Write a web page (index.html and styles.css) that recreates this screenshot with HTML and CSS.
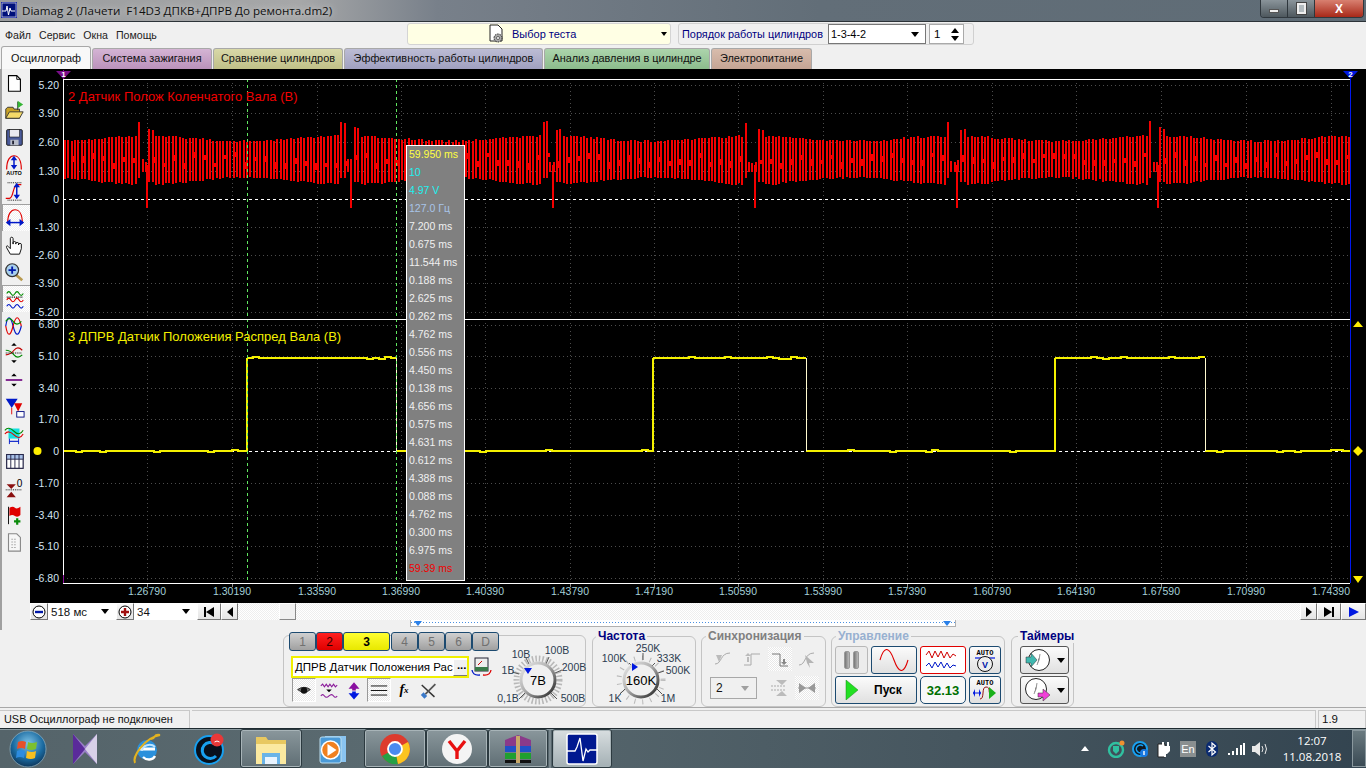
FILE: index.html
```html
<!DOCTYPE html>
<html lang="ru">
<head>
<meta charset="utf-8">
<title>Diamag 2</title>
<link rel="stylesheet" href="styles.css">
</head>
<body>
<div class="app">
  <header class="titlebar">
    <svg class="appicon" width="16" height="16" viewBox="0 0 16 16"><rect width="16" height="16" fill="#0a1a9a"/><rect x="1" y="1" width="14" height="14" fill="#00107a" stroke="#fff" stroke-width=".6"/><path d="M1 9h4l1-5 1.500 9 1.500-7 1 3h4" fill="none" stroke="#fff" stroke-width="1"/></svg>
    <span class="title">Diamag 2 (Лачети&nbsp; F14D3 ДПКВ+ДПРВ До ремонта.dm2)</span>
    <div class="winbtns">
      <span class="wb wb-min"><i class="minbar"></i></span>
      <span class="wb wb-max"><i class="maxbox"></i></span>
      <span class="wb wb-close">X</span>
    </div>
  </header>

  <div class="menurow">
    <nav class="menu"><span>Файл</span><span>Сервис</span><span>Окна</span><span>Помощь</span></nav>
    <div class="testpick">
      <svg width="18" height="20" viewBox="0 0 18 20"><path d="M2 1h8l4 4v12H2z" fill="#fff" stroke="#222"/><circle cx="10" cy="14" r="4" fill="#aaa" stroke="#222" stroke-dasharray="1.500 1"/><circle cx="10" cy="14" r="1.500" fill="#fff" stroke="#222" stroke-width=".6"/></svg>
      <span>Выбор теста</span><b class="tri tri-s"></b>
    </div>
    <div class="orderbox">
      <span>Порядок работы цилиндров</span>
      <div class="sel"><span>1-3-4-2</span><b class="tri"></b></div>
      <div class="spin"><span>1</span><div class="spinbtns"><b class="tri tri-up"></b><b class="tri"></b></div></div>
    </div>
  </div>

  <div class="tabs">
    <span class="tab t0">Осциллограф</span>
    <span class="tab t1">Система зажигания</span>
    <span class="tab t2">Сравнение цилиндров</span>
    <span class="tab t3">Эффективность работы цилиндров</span>
    <span class="tab t4">Анализ давления в цилиндре</span>
    <span class="tab t5">Электропитание</span>
  </div>

  <div class="workspace">
    <aside class="tools">
      <span class="tool"><svg viewBox="0 0 24 24"><path d="M6 4h9l4 4v13H6z" fill="#fff" stroke="#000" stroke-width="1.200"/><path d="M15 4v4h4" fill="none" stroke="#000"/></svg></span>
      <span class="tool"><svg viewBox="0 0 24 24"><path d="M3 21V11l2-2h6l1 2h6v10z" fill="#c9a227" stroke="#333"/><path d="M3 21l4-7h15l-4 7z" fill="#f4d968" stroke="#333"/><path d="M16 3v9" stroke="#333"/><path d="M16 2l6 4-6 4z" fill="#35b535"/></svg></span>
      <span class="tool"><svg viewBox="0 0 24 24"><rect x="4" y="4" width="17" height="17" rx="1" fill="#4a5a9a" stroke="#111"/><rect x="7" y="4" width="11" height="8" fill="#e8e8f0" stroke="#111" stroke-width=".6"/><rect x="8" y="15" width="9" height="6" fill="#b8bcc8"/><rect x="10" y="16" width="2" height="4" fill="#223"/></svg></span>
      <span class="tool"><svg viewBox="0 0 24 24"><path d="M4 18C4 7 8 3 12 3s8 4 8 15" fill="none" stroke="#e00000" stroke-width="1.300"/><path d="M12 5v11" stroke="#0018c8" stroke-width="1.600"/><path d="M8.500 8 12 3l3.500 5zM8.500 13 12 18l3.500-5z" fill="#0018c8"/><text x="12" y="24" class="ictext">AUTO</text></svg></span>
      <span class="tool"><svg viewBox="0 0 24 24"><path d="M3 20h4c5 0 3-15 9-15h4" fill="none" stroke="#e00000" stroke-width="1.300"/><path d="M5 3h15" stroke="#000" stroke-dasharray="1 1"/><path d="M5 22h15" stroke="#000" stroke-dasharray="1 1"/><path d="M15 6v12" stroke="#0018c8" stroke-width="1.600"/><path d="M11.500 8 15 3l3.500 5zM11.500 16l3.500 5 3.500-5z" fill="#0018c8"/></svg></span>
      <span class="tool pressed"><svg viewBox="0 0 24 24"><path d="M4 18C4 7 8 3 12 3s8 4 8 15" fill="none" stroke="#e00000" stroke-width="1.300"/><path d="M5 17h14" stroke="#0018c8" stroke-width="1.600"/><path d="M7 13l-5 4 5 4zM17 13l5 4-5 4z" fill="#0018c8"/></svg></span>
      <span class="tool"><svg viewBox="0 0 24 24"><path d="M8 22l-4-7c-1-2 1-3 2-1l2 2V5c0-2 3-2 3 0v6-2c0-1 3-1 3 0v2-1c0-1 3-1 3 0v2-1c0-1 3-1 3 0v5l-2 6z" fill="#fff" stroke="#000"/></svg></span>
      <span class="tool"><svg viewBox="0 0 24 24"><path d="M14 15l7 6" stroke="#b89a50" stroke-width="3"/><circle cx="10" cy="10" r="7" fill="#a8d0ee" stroke="#333" stroke-width="1.300"/><path d="M6 10h8M10 6v8" stroke="#0018a8" stroke-width="2"/></svg></span>
      <span class="tool pressed"><svg viewBox="0 0 24 24"><g fill="none" stroke-width="1.200"><path d="M3 6q2.200-4 4.500 0t4.500 0 4.500 0 4.500 0" stroke="#008a00"/><path d="M3 13q2.200-4 4.500 0t4.500 0 4.500 0 4.500 0" stroke="#e00000"/><path d="M3 20q2.200-4 4.500 0t4.500 0 4.500 0 4.500 0" stroke="#0018c8"/><path d="M3 10h18" stroke="#000" stroke-dasharray="1 1"/></g></svg></span>
      <span class="tool"><svg viewBox="0 0 24 24"><g fill="none" stroke-width="1.300"><path d="M3 12C5 0 8 0 11 12s6 12 9 0" stroke="#0018c8"/><path d="M3 12C5 24 8 24 11 12s6-12 9 0" stroke="#e00000"/><path d="M3 7q4-6 8 0t9 0" stroke="#008a00"/></g></svg></span>
      <span class="tool"><svg viewBox="0 0 24 24"><g fill="none" stroke-width="1.300"><path d="M3 9q5 0 9 5t9 0" stroke="#008a00"/><path d="M3 14q5 0 9-5t9 0" stroke="#c00000"/><path d="M3 12h18" stroke="#000" stroke-dasharray="1 1"/></g><path d="M9 4l3-3 3 3zM9 20l3 3 3-3z" fill="#000"/></svg></span>
      <span class="tool"><svg viewBox="0 0 24 24"><path d="M3 12h18" stroke="#7a1a8a" stroke-width="2"/><path d="M9 8l3-3 3 3zM9 16l3 3 3-3z" fill="#000"/></svg></span>
      <span class="tool"><svg viewBox="0 0 24 24"><path d="M3 3h13l-6.500 10z" fill="#0018c8"/><path d="M12 8h9l-4.500 9z" fill="#e00000"/><path d="M9.500 13v7M16.500 17v5" stroke="#e00000"/><rect x="15" y="17" width="8" height="6" fill="#fff" stroke="#000a80"/></svg></span>
      <span class="tool"><svg viewBox="0 0 24 24"><path d="M6 6h12v11H6z" fill="#15e0e0"/><g fill="none" stroke-width="1.200"><path d="M2 8q4-5 10 1t10-1" stroke="#008a00"/><path d="M2 12q4-5 10 1t10-1" stroke="#e00000"/><path d="M7 20h10" stroke="#0018c8"/></g><path d="M7 17v6M17 17v6" stroke="#0018c8"/></svg></span>
      <span class="tool"><svg viewBox="0 0 24 24"><rect x="4" y="5" width="18" height="15" fill="#fff" stroke="#222244" stroke-width="1.300"/><rect x="4" y="5" width="18" height="5" fill="#a8c0e8" stroke="#222244"/><path d="M8.500 5v15M13 5v15M17.500 5v15" stroke="#222244"/></svg></span>
      <span class="tool"><svg viewBox="0 0 24 24"><path d="M4 8h10l-5 5zM4 22h10l-5-6z" fill="#8a1010"/><path d="M3 14h18" stroke="#000" stroke-dasharray="1 1"/><text x="18" y="11" class="ictext ic-zero">0</text></svg></span>
      <span class="tool"><svg viewBox="0 0 24 24"><path d="M6 3v19" stroke="#000"/><path d="M7 4q4-2 6 0t6-1v9q-3 3-6 1t-6 0z" fill="#e00000"/><path d="M12 19h7M15.500 15.500v7" stroke="#0a8a0a" stroke-width="2.400"/></svg></span>
      <span class="tool"><svg viewBox="0 0 24 24"><path d="M6 3h9l4 4v15H6z" fill="#f6f6f6" stroke="#888" stroke-width="1.200"/><path d="M9 9h6M9 12h6M9 15h6M9 18h6" stroke="#aaa" stroke-dasharray="2 1"/></svg></span>
    </aside>

    <div class="scopecol">
      <div class="scope">
        <svg id="plot" class="plot" width="1336" height="534" viewBox="30 69 1336 534">
          <path class="grid" d="M63 85H1350M63 113H1350M63 142H1350M63 171H1350M63 227H1350M63 255H1350M63 283H1350M63 312H1350M63 325H1350M63 356H1350M63 388H1350M63 419H1350M63 483H1350M63 515H1350M63 546H1350M63 578H1350M147 79V583M232 79V583M317 79V583M401 79V583M485 79V583M570 79V583M654 79V583M738 79V583M823 79V583M907 79V583M992 79V583M1076 79V583M1161 79V583M1246 79V583M1331 79V583"/>
          <path class="ticks" d="M147 583v4M232 583v4M317 583v4M401 583v4M485 583v4M570 583v4M654 583v4M738 583v4M823 583v4M907 583v4M992 583v4M1076 583v4M1161 583v4M1246 583v4M1331 583v4"/>
          <path class="zero" d="M63 199.500H1350M63 451.500H1350"/>
          <path id="red" class="redwave" d=""/>
          <path id="yellow" class="yellowwave" d=""/>
          <path class="fall" d="M396.500 358V451M806.500 358V451M1205.500 358V451"/>
          <path class="cursor" d="M247.500 79V583M396.500 79V583"/>
          <path class="frame" d="M63.500 79V583M63 79.500H1350M30 319.500H1350M63 583.500H1350"/>
          <path class="bluel" d="M1350.500 79V583"/>
          <path class="purplel" d="M63.500 70V79M63.500 575V583"/>
          <path d="M56 71h15l-7.500 8z" fill="#7a0e8a"/>
          <text x="63.500" y="76.500" class="mark">1</text>
          <path d="M1343 71h15l-7.500 8z" fill="#0018e0"/>
          <text x="1350.500" y="77" class="mark">2</text>
          <path d="M1353 327l5-6 5 6zM1353 576l5 7 5-7zM1358 446l5 5-5 5-5-5z" fill="#ffee00"/>
          <circle cx="37.500" cy="451" r="4" fill="#ffee00"/>
          <text x="68" y="101" class="lbl lbl-r">2 Датчик Полож Коленчатого Вала (В)</text>
          <text x="68" y="341" class="lbl lbl-y">3 ДПРВ Датчик Положения Распред Вала (В)</text>
          <g class="yl">
            <text x="59" y="89">5.20</text><text x="59" y="117">3.90</text><text x="59" y="146">2.60</text><text x="59" y="175">1.30</text><text x="59" y="203">0</text><text x="59" y="231">-1.30</text><text x="59" y="259">-2.60</text><text x="59" y="287">-3.90</text><text x="59" y="316">-5.20</text>
            <text x="59" y="328">6.80</text><text x="59" y="360">5.10</text><text x="59" y="392">3.40</text><text x="59" y="423">1.70</text><text x="59" y="455">0</text><text x="59" y="487">-1.70</text><text x="59" y="519">-3.40</text><text x="59" y="550">-5.10</text><text x="59" y="582">-6.80</text>
          </g>
          <g class="xl">
            <text x="147" y="595">1.26790</text><text x="232" y="595">1.30190</text><text x="317" y="595">1.33590</text><text x="401" y="595">1.36990</text><text x="485" y="595">1.40390</text><text x="570" y="595">1.43790</text><text x="654" y="595">1.47190</text><text x="738" y="595">1.50590</text><text x="823" y="595">1.53990</text><text x="907" y="595">1.57390</text><text x="992" y="595">1.60790</text><text x="1076" y="595">1.64190</text><text x="1161" y="595">1.67590</text><text x="1246" y="595">1.70990</text><text x="1331" y="595">1.74390</text>
          </g>
        </svg>
        <div class="readout">
          <span class="c-y">59.950 ms</span><span class="c-c">10</span><span class="c-c">4.97 V</span><span class="c-b">127.0 Гц</span>
          <span>7.200 ms</span><span>0.675 ms</span><span>11.544 ms</span><span>0.188 ms</span><span>2.625 ms</span><span>0.262 ms</span><span>4.762 ms</span><span>0.556 ms</span><span>4.450 ms</span><span>0.138 ms</span><span>4.656 ms</span><span>0.575 ms</span><span>4.631 ms</span><span>0.612 ms</span><span>4.388 ms</span><span>0.088 ms</span><span>4.762 ms</span><span>0.300 ms</span><span>6.975 ms</span>
          <span class="c-r">59.39 ms</span>
        </div>
      </div>
      <div class="scrollrow">
        <span class="rbtn w18"><svg width="14" height="14" viewBox="0 0 14 14"><circle cx="7" cy="7" r="6" fill="#fff" stroke="#000"/><path d="M3 7h8" stroke="#0018a8" stroke-width="2.400"/></svg></span>
        <div class="combo c68"><span>518 мс</span><b class="tri"></b></div>
        <span class="rbtn w18"><svg width="14" height="14" viewBox="0 0 14 14"><circle cx="7" cy="7" r="6" fill="#fff" stroke="#000"/><path d="M3 7h8M7 3v8" stroke="#a01010" stroke-width="2.400"/></svg></span>
        <div class="combo c62"><span>34</span><b class="tri"></b></div>
        <span class="rbtn w24"><svg width="12" height="10" viewBox="0 0 12 10"><path d="M1 0h2v10H1zM11 0v10L3 5z"/></svg></span>
        <span class="rbtn w17"><svg width="6" height="10" viewBox="0 0 6 10"><path d="M6 0v10L0 5z"/></svg></span>
        <div class="track"><span class="thumb"></span></div>
        <span class="rbtn w17"><svg width="6" height="10" viewBox="0 0 6 10"><path d="M0 0v10l6-5z"/></svg></span>
        <span class="rbtn w24"><svg width="12" height="10" viewBox="0 0 12 10"><path d="M9 0h2v10H9zM1 0v10l8-5z"/></svg></span>
        <span class="rbtn w25"><svg width="12" height="10" viewBox="0 0 12 10"><path d="M1 0v10l10-5z" fill="#0018e0"/></svg></span>
      </div>
    </div>
  </div>

  <div class="strip"><span class="stripbar"><b class="bt"></b><b class="bt"></b></span></div>

  <section class="panels">
    <div class="group g-chan">
      <div class="chanleft">
        <div class="chans">
          <span class="ch">1</span><span class="ch ch-red">2</span><span class="ch ch-yel">3</span><span class="ch">4</span><span class="ch">5</span><span class="ch">6</span><span class="ch">D</span>
        </div>
        <div class="namerow">
          <div class="namefield"><span>ДПРВ Датчик Положения Рас</span><b class="dots">...</b></div>
          <svg width="22" height="22" viewBox="0 0 22 22"><rect x="5" y="2" width="13" height="13" fill="#eee" stroke="#223"/><rect x="5" y="11" width="13" height="4" fill="#3a7a4a"/><path d="M8 9l4-4" stroke="#c00"/><path d="M2 14q1 6 8 5" fill="none" stroke="#0018c8" stroke-width="1.300"/><path d="M21 14q-1 6-8 5" fill="none" stroke="#d00" stroke-width="1.300"/></svg>
        </div>
        <div class="iconrow">
          <span class="ic pressed"><svg viewBox="0 0 22 20"><path d="M4 9q7-5 14 0-7 6-14 0z" fill="#777" stroke="#222"/><circle cx="11" cy="10" r="3.500" fill="#111"/></svg></span>
          <span class="ic"><svg viewBox="0 0 22 20"><g fill="none" stroke="#8a1a9a" stroke-width="1.200"><path d="M2 5l2-2 2 3 2-3 2 3 2-3 2 3 2-3 2 3 2-2"/><path d="M2 16q2-3 4 0t5 0 5 0 4 0"/></g><path d="M8 9h6l-3 3z" fill="#000"/></svg></span>
          <span class="ic"><svg viewBox="0 0 22 20"><path d="M11 1l6 7h-4v2H9V8H5z" fill="#8a10a0"/><path d="M11 20l6-7h-4v-2H9v2H5z" fill="#0018e0"/></svg></span>
          <span class="ic pressed"><svg viewBox="0 0 22 20"><path d="M2 5h18M2 10h18M2 15h18" stroke="#000"/></svg></span>
          <span class="ic ic-fx">f<small>x</small></span>
          <span class="ic"><svg viewBox="0 0 22 20"><path d="M3 4l14 13" stroke="#333" stroke-width="1.600"/><path d="M18 3l-11 11" stroke="#555" stroke-width="2"/><path d="M5 12l4 4-3 3-4-4z" fill="#3a78c8"/></svg></span>
        </div>
      </div>
      <svg class="knob" width="83" height="68" viewBox="0 0 83 68">
        <defs><linearGradient id="rg" x1="0" y1="0" x2="1" y2="1"><stop offset="0" stop-color="#e8e8e8"/><stop offset=".45" stop-color="#b0b0b0"/><stop offset="1" stop-color="#202020"/></linearGradient></defs>
        <circle cx="36" cy="44" r="21.500" class="kticks"/>
        <path d="M23 57l-6 6M17 38l-7-2M27 28l-3-6M44 28l3-7M53 37l7-3M49 57l6 6" class="kmaj"/>
        <circle cx="36" cy="44" r="17" class="kring"/>
        <path d="M22 32h8l-4 6z" fill="#0018e0"/>
        <text x="36" y="48.500" class="kval">7В</text>
        <text x="19" y="22" class="klab">10В</text>
        <text x="55" y="18" class="klab">100В</text>
        <text x="6" y="38" class="klab">1В</text>
        <text x="72" y="35" class="klab">200В</text>
        <text x="6" y="66" class="klab">0,1В</text>
        <text x="71" y="66" class="klab">500В</text>
      </svg>
    </div>

    <fieldset class="group g-freq">
      <legend class="lg-navy">Частота</legend>
      <svg class="knob" width="102" height="60" viewBox="0 0 102 60">
        <circle cx="48" cy="37" r="22" class="kticks kt-wide"/>
        <path d="M50 10V17M36 20l4 4M62 20l-4 4M71 28l-6 2M27 51l5-5M69 51l-5-5" class="kmaj"/>
        <circle cx="48" cy="37" r="17" class="kring"/>
        <path d="M39 20v8l6-4z" fill="#0018e0"/>
        <text x="48" y="41.500" class="kval">160K</text>
        <text x="55" y="9" class="klab">250K</text>
        <text x="21" y="19" class="klab">100K</text>
        <text x="76" y="19" class="klab">333K</text>
        <text x="85" y="31" class="klab">500K</text>
        <text x="22" y="59" class="klab">1K</text>
        <text x="75" y="59" class="klab">1M</text>
      </svg>
    </fieldset>

    <fieldset class="group g-sync">
      <legend class="lg-gray">Синхронизация</legend>
      <div class="syncgrid">
        <span class="si"><svg viewBox="0 0 20 20"><path d="M2 15c7 0 5-11 15-11" fill="none" stroke="#aaa"/><path d="M3 6l6 0-3 7z" fill="#bbb"/></svg></span>
        <span class="si"><svg viewBox="0 0 20 20"><path d="M2 16h7V5h9" fill="none" stroke="#aaa"/><path d="M3 7l3-3 3 3zM5 8h2v5H5z" fill="#bbb"/></svg></span>
        <span class="si pressed"><svg viewBox="0 0 20 20"><path d="M2 5h8v12h8" fill="none" stroke="#777"/><path d="M13 10h2v4h-2zM11 13h6l-3 3z" fill="#888"/></svg></span>
        <span class="si"><svg viewBox="0 0 20 20"><path d="M2 16c7 0 5-12 15-12" fill="none" stroke="#aaa"/><path d="M8 6l9 8-5 0 1 5-3-5z" fill="#b4b4b4"/></svg></span>
        <div class="syncsel"><span>2</span><b class="tri tri-dis"></b></div>
        <span class="si"><svg viewBox="0 0 20 20"><path d="M1 8h14M1 12h14" stroke="#aaa" stroke-dasharray="2 1"/><path d="M6 2h11l-5 5zM6 18h11l-5-5z" fill="#bbb"/></svg></span>
        <span class="si pressed"><svg viewBox="0 0 20 20"><path d="M1 10h18" stroke="#999"/><path d="M2 5l7 5-7 5zM18 5l-7 5 7 5z" fill="#999"/></svg></span>
      </div>
    </fieldset>

    <fieldset class="group g-ctrl">
      <legend class="lg-lblue">Управление</legend>
      <div class="ctrlgrid">
        <span class="cb cb-dis"><i class="pbar"></i><i class="pbar"></i></span>
        <span class="cb"><svg width="30" height="22" viewBox="0 0 30 22"><path d="M1 11C5-3 10-3 15 11s10 14 14 0" fill="none" stroke="#e00000" stroke-width="1.100"/></svg></span>
        <span class="cb cb-redb"><svg width="36" height="24" viewBox="0 0 36 24"><path d="M1 7l3-4 3 7 3-7 3 6 3-6 3 7 3-6 3 6 3-4 3 2" fill="none" stroke="#d00000"/><path d="M1 18l3-3 3 5 3-6 3 5 3-5 3 6 3-5 3 5 3-3 3 1" fill="none" stroke="#0018c8"/></svg></span>
        <span class="cb"><svg width="26" height="26" viewBox="0 0 26 26"><text x="13" y="7.500" class="ictext ic-auto">AUTO</text><path d="M3 11h20" stroke="#0018e0" stroke-width="1.200"/><circle cx="13" cy="17" r="7.500" fill="#eee" stroke="#111"/><text x="13" y="20.500" class="ictext ic-v">V</text></svg></span>
        <span class="cb cb-start"><svg width="14" height="20" viewBox="0 0 14 20"><path d="M1 0v20l12-10z" fill="#22e022" stroke="#1a8a1a" stroke-width=".5"/></svg><b>Пуск</b></span>
        <span class="cb cb-num">32.13</span>
        <span class="cb"><svg width="26" height="26" viewBox="0 0 26 26"><text x="13" y="7.500" class="ictext ic-auto">AUTO</text><path d="M1 16h8" stroke="#0018e0"/><path d="M3 12l-2 4 2 4zM7 12l2 4-2 4z" fill="#0018e0"/><path d="M8 22c5 0 1-12 6-12s2 6 4 6" fill="none" stroke="#901010"/><path d="M17 10v12l7-6z" fill="#18b018"/></svg></span>
      </div>
    </fieldset>

    <fieldset class="group g-time">
      <legend class="lg-navy">Таймеры</legend>
      <div class="timers">
        <span class="cb tb"><svg width="26" height="24" viewBox="0 0 26 24"><circle cx="14" cy="12" r="10.500" fill="#fff" stroke="#222"/><path d="M15 6l-1 6-2 5" stroke="#999"/><path d="M1 9h5V5l6 7-6 7v-4H1z" fill="#40b8b0" stroke="#333" stroke-width=".5"/></svg><b class="tri"></b></span>
        <span class="cb tb"><svg width="26" height="24" viewBox="0 0 26 24"><circle cx="11" cy="11" r="10.500" fill="#fff" stroke="#222"/><path d="M12 5l-1 6-2 5" stroke="#999"/><path d="M13 15h5v-4l7 6-7 6v-4h-5z" fill="#f040d8" stroke="#333" stroke-width=".5"/></svg><b class="tri"></b></span>
      </div>
    </fieldset>
  </section>

  <footer class="status">
    <span class="st st1">USB Осциллограф не подключен</span>
    <span class="st st2"></span>
    <span class="st st3">1.9</span>
  </footer>

  <div class="taskbar">
    <span class="orb"><svg width="40" height="40" viewBox="0 0 40 40"><defs><radialGradient id="og" cx=".5" cy=".35" r=".7"><stop offset="0" stop-color="#7fc4e8"/><stop offset=".6" stop-color="#1a6aa0"/><stop offset="1" stop-color="#0c2c4c"/></radialGradient></defs><circle cx="20" cy="20" r="18" fill="url(#og)" stroke="#8ab" stroke-width=".8"/><path d="M10 13q4-2 8 0l-1 7q-4-2-8 0z" fill="#e8502a"/><path d="M20 13q4 2 9 0l-1 7q-5 2-9 0z" fill="#7cc030"/><path d="M9 22q4-2 8 0l-1 7q-4-2-8 0z" fill="#2d8ce0"/><path d="M19 22q5 2 9 0l-1 7q-4 2-9 0z" fill="#f8c020"/></svg></span>
    <span class="task"><svg width="34" height="34" viewBox="0 0 34 34"><path d="M5 2l12 12L29 2v30L17 20 5 32z" fill="#9a80c8"/><path d="M5 2l12 15L5 32z" fill="#5a2a9a"/><path d="M29 2 17 17l12 15z" fill="#d8d0e8"/></svg></span>
    <span class="task"><svg width="34" height="34" viewBox="0 0 34 34"><circle cx="17" cy="18" r="10" fill="#2a90dc"/><path d="M9 17h16" stroke="#fff" stroke-width="3"/><path d="M12 19c0-6 9-8 13-4" fill="none" stroke="#bfe4ff" stroke-width="2"/><path d="M5 31C2 25 14 6 30 3c-8-1-2 2-9 4" fill="none" stroke="#e2b220" stroke-width="2"/><path d="M25 24c-2 4-8 5-12 1" fill="none" stroke="#fff" stroke-width="2.400"/></svg></span>
    <span class="task"><svg width="34" height="34" viewBox="0 0 34 34"><circle cx="17" cy="18" r="14" fill="#08101c" stroke="#18a0f0" stroke-width="2"/><path d="M23 12a8 8 0 1 0 1 12" fill="none" stroke="#18a0f0" stroke-width="3"/><circle cx="25" cy="8" r="6.500" fill="#e83838"/><path d="M22.500 10q2.500-2 5 0" fill="none" stroke="#fff"/></svg></span>
    <span class="task on"><svg width="36" height="34" viewBox="0 0 36 34"><path d="M3 5h10l2 3h18v24H3z" fill="#e8c860"/><path d="M3 12h30v20H3z" fill="#fbe9a0"/><rect x="9" y="21" width="18" height="11" fill="#6ab4e8"/><rect x="12" y="25" width="12" height="7" fill="#e9f4ff"/></svg></span>
    <span class="task"><svg width="30" height="32" viewBox="0 0 30 32"><rect x="7" y="3" width="21" height="26" fill="#8ac4f0"/><rect x="2" y="4" width="21" height="26" rx="2" fill="#4a9ad8" stroke="#bde"/><circle cx="12.500" cy="17" r="9" fill="#f08020" stroke="#fff" stroke-width="1.500"/><path d="M9.500 11v12l9-6z" fill="#fff"/></svg></span>
    <span class="task on"><svg width="32" height="32" viewBox="0 0 32 32"><circle cx="16" cy="16" r="15" fill="#dd3b2e"/><path d="M16 16 3 23A15 15 0 0 0 19 31z" fill="#26a045"/><path d="M16 16l13-7A15 15 0 0 1 19 31z" fill="#fbc420"/><circle cx="16" cy="16" r="7" fill="#4a8af0" stroke="#fff" stroke-width="1.800"/></svg></span>
    <span class="task on"><svg width="32" height="32" viewBox="0 0 32 32"><circle cx="16" cy="16" r="15" fill="#f4f4f4"/><path d="M8 8l8 10v8M24 8l-8 10" fill="none" stroke="#e81010" stroke-width="3.400"/></svg></span>
    <span class="task on wrar"><svg width="32" height="32" viewBox="0 0 32 32"><path d="M3 7l13-5 13 5v6H3z" fill="#8a3a8a"/><rect x="3" y="13" width="26" height="6" fill="#2050c8"/><rect x="3" y="20" width="26" height="6" fill="#20a030"/><rect x="3" y="27" width="26" height="3" fill="#111"/><path d="M14 3h4v27h-4z" fill="#c8a868"/></svg></span>
    <i class="taskdiv"></i>
    <span class="task on cur"><svg width="32" height="32" viewBox="0 0 32 32"><rect x="1" y="1" width="30" height="30" rx="2" fill="#001890" stroke="#fff" stroke-width="1.500"/><path d="M1 18h8l2-4 3-9 3 23 3-12 2 3 2-2h8" fill="none" stroke="#fff" stroke-width="1.300"/></svg></span>
    <div class="tray">
      <span class="tr-up"></span>
      <span class="tr"><svg width="18" height="18" viewBox="0 0 18 18"><circle cx="9" cy="10" r="7" fill="none" stroke="#30c0a0" stroke-width="2.400"/><path d="M6 6h6v5l-3 3-3-3z" fill="#30c0a0"/><circle cx="15" cy="3" r="2.500" fill="#f09030"/></svg></span>
      <span class="tr"><svg width="18" height="18" viewBox="0 0 18 18"><circle cx="9" cy="9" r="7" fill="#101820" stroke="#18a0f0" stroke-width="2"/><path d="M12 6a4 4 0 1 0 0 6" fill="none" stroke="#18a0f0" stroke-width="1.600"/><circle cx="13" cy="13" r="4" fill="#1878e0"/><path d="M13 11v4" stroke="#fff" stroke-width="1.400"/></svg></span>
      <span class="tr"><svg width="18" height="18" viewBox="0 0 18 18"><path d="M3 4h7v13H3z" fill="#fff" stroke="#222"/><path d="M7 2h2v4H7zM12 2h2v4h-2zM7 6h8v5l-3 3H9z" fill="#fff"/><path d="M10 14v3" stroke="#fff" stroke-width="2"/></svg></span>
      <span class="lang">En</span>
      <span class="tr"><svg width="14" height="18" viewBox="0 0 14 18"><rect x="1" y="1" width="12" height="16" rx="6" fill="#0a2a70"/><path d="M3.500 6l7 6L7 15V3l3.500 3-7 6" fill="none" stroke="#fff" stroke-width="1.200"/></svg></span>
      <span class="tr"><svg width="18" height="14" viewBox="0 0 18 14"><path d="M1 11h2v2H1zM5 9h2v4H5zM9 6h2v7H9zM13 3h2v10h-2zM16 1h2v12h-2z" fill="#fff"/></svg></span>
      <span class="tr"><svg width="18" height="16" viewBox="0 0 18 16"><path d="M1 5h3l5-4v14l-5-4H1z" fill="#e8e8e8"/><path d="M11 5q2 3 0 6M14 3q3 5 0 10" fill="none" stroke="#e8e8e8"/></svg></span>
      <div class="clock"><span>12:07</span><span>11.08.2018</span></div>
      <span class="showdesk"></span>
    </div>
  </div>
</div>
<script src="scope.js"></script>
</body>
</html>
```

FILE: styles.css
```css
*{box-sizing:border-box}
html,body{margin:0;padding:0;height:100%;overflow:hidden}
body{font-family:"Liberation Sans",Arial,sans-serif;font-size:11px;color:#111;background:#f0f0f0}
.app{width:1366px;height:768px;display:flex;flex-direction:column}
i,b{display:block;font-style:normal}

.titlebar{height:22px;flex:none;display:flex;align-items:center;padding:0 0 1px 1px;border-bottom:1px solid #2c3338;background:linear-gradient(90deg,#9a9c9e 0,#a6a7a8 22%,#78808a 32%,#626e78 60%,#5f6c76 100%)}
.appicon{flex:none}
.title{margin-left:5px;font-family:"Open Sans",sans-serif;font-size:11.600px;color:#101010;text-shadow:0 0 6px #ddd;white-space:pre}
.winbtns{margin-left:auto;margin-right:2px;height:18px;display:flex;align-self:flex-start;border:1px solid #30383e;border-top:0;border-radius:0 0 4px 4px;overflow:hidden}
.wb{display:flex;align-items:center;justify-content:center;height:17px;width:27px;background:linear-gradient(#8a949a,#4e585e);border-right:1px solid #2e363c}
.wb-close{width:48px;border:0;background:linear-gradient(#d88070,#a82818);color:#fff;font-weight:bold;font-size:12px}
.minbar{width:10px;height:4px;background:#eee;border:1px solid #555;margin-top:4px}
.maxbox{width:9px;height:11px;background:#b4bcc0;border:2px solid #eee;outline:1px solid #444}

.menurow{height:24px;flex:none;display:flex;align-items:center;background:#f0f0f0}
.menu{width:407px;display:flex;gap:8px;padding:1px 0 0 5px;font-size:10.600px;color:#222}
.testpick{width:264px;height:22px;display:flex;align-items:center;background:#ffffe4;border:1px solid #d4d4d4;border-radius:3px;padding-left:80px;color:#000080;font-size:11px;gap:6px}
.testpick span{flex:1}
.tri{width:0;height:0;border-left:4.500px solid transparent;border-right:4.500px solid transparent;border-top:5px solid #000}
.tri-s{border-left-width:3px;border-right-width:3px;border-top-width:4px;margin-right:3px}
.tri-up{border-top:0;border-bottom:5px solid #000}
.orderbox{width:296px;height:22px;margin-left:7px;display:flex;align-items:center;border:1px solid #d0d0d0;border-radius:3px;padding-left:3px;color:#000080;font-size:10.900px}
.orderbox>span{width:146px;white-space:nowrap}
.sel{width:98px;height:20px;background:#fff;border:1px solid #777;display:flex;align-items:center;justify-content:space-between;padding:0 6px 0 2px;color:#000}
.spin{width:35px;height:20px;margin-left:3px;background:#fff;border:1px solid #aaa;display:flex;align-items:center;justify-content:space-between;padding:0 4px;color:#000;font-size:11.500px}
.spinbtns{display:flex;flex-direction:column;gap:3px}

.tabs{height:23px;flex:none;display:flex;align-items:flex-end;gap:1px;padding-left:1px;font-size:10.900px;color:#111}
.tab{height:21px;display:flex;align-items:center;justify-content:center;padding-bottom:3px;border:1px solid #a8a8a8;border-bottom:0;border-radius:3px 3px 0 0}
.t0{width:90px;height:23px;background:#f8f8f8;padding-bottom:1px}
.t1{width:120px;background:linear-gradient(#d4b4d4,#bb92bb)}
.t2{width:130px;background:linear-gradient(#d8d8a8,#c0c088)}
.t3{width:199px;background:linear-gradient(#bcbcd4,#a0a0c0)}
.t4{width:166px;background:linear-gradient(#acd4ac,#8cbc8c)}
.t5{width:101px;background:linear-gradient(#d8bcac,#c4a494)}

.workspace{height:551px;flex:none;display:flex}
.tools{width:30px;flex:none;display:flex;flex-direction:column;border-left:2px solid #a0a0a0;background:#f0f0f0}
.tool{height:27px;display:flex;align-items:center;justify-content:center;padding-right:4px}
.tool svg{width:22px;height:22px}
.tool.pressed{background:#fff repeating-conic-gradient(#f0f0f0 0 25%,#fff 0 50%) 0 0/2px 2px;border-top:1px solid #a0a0a0;border-left:1px solid #a0a0a0}
.ictext{font:bold 6px "Liberation Sans",sans-serif;text-anchor:middle;fill:#000}
.ic-zero{font:11px "Liberation Sans",sans-serif}
.ic-auto{font:bold 7px "Liberation Mono",monospace;fill:#000}
.ic-v{font:bold 9px "Liberation Sans",sans-serif;fill:#0018a8}

.scopecol{flex:1;display:flex;flex-direction:column;min-width:0}
.scope{position:relative;height:534px;flex:none;background:#000}
.plot{display:block}
.grid{fill:none;stroke:#4c4c4c;stroke-width:1;stroke-dasharray:1 3;shape-rendering:crispEdges}
.ticks{fill:none;stroke:#888;shape-rendering:crispEdges}
.zero{fill:none;stroke:#fff;stroke-width:1;stroke-dasharray:3 3;shape-rendering:crispEdges}
.redwave{fill:none;stroke:#f40000;stroke-width:2;shape-rendering:crispEdges}
.yellowwave{fill:none;stroke:#f4f000;stroke-width:2;stroke-linejoin:miter;shape-rendering:crispEdges}
.fall{fill:none;stroke:#fffbd0;stroke-width:1;shape-rendering:crispEdges}
.cursor{fill:none;stroke:#60e860;stroke-width:1;stroke-dasharray:3 3;shape-rendering:crispEdges}
.frame{fill:none;stroke:#fff;stroke-width:1;shape-rendering:crispEdges}
.bluel{fill:none;stroke:#0018f0;stroke-width:1.500;shape-rendering:crispEdges}
.purplel{fill:none;stroke:#9010a0;stroke-width:1;shape-rendering:crispEdges}
.mark{font:bold 8px "Liberation Sans",sans-serif;fill:#fff;text-anchor:middle}
.lbl{font:13px "Liberation Sans",sans-serif}
.lbl-r{fill:#f00000}
.lbl-y{fill:#f4f000}
.yl text{font:10.500px "Liberation Sans",sans-serif;fill:#d4e4f0;text-anchor:end}
.xl text{font:10.500px "Liberation Sans",sans-serif;fill:#a4d0d8;text-anchor:middle}

.readout{position:absolute;left:376px;top:76px;width:59px;height:436px;background:#808080;border:1px solid #fff;display:flex;flex-direction:column;color:#f0f0f0;font-size:10.500px}
.readout span{height:18px;line-height:16px;padding-left:2px;white-space:nowrap}
.c-y{color:#ffff40}.c-c{color:#20f0f0}.c-b{color:#a8c4e8}.c-r{color:#f00000}

.scrollrow{height:17px;flex:none;display:flex;background:#fff}
.rbtn{display:flex;align-items:center;justify-content:center;height:17px;background:linear-gradient(#f8f8f8,#e4e4e4);border:1px solid;border-color:#fff #777 #777 #fff;flex:none}
.w18{width:18px}.w17{width:17px}.w24{width:24px}.w25{width:25px}
.combo{display:flex;align-items:center;justify-content:space-between;padding:0 7px 0 3px;background:#fff;font-size:11.500px;flex:none}
.c68{width:68px}.c62{width:63px}
.track{flex:1;background:repeating-conic-gradient(#eee 0 25%,#fff 0 50%) 0 0/2px 2px;padding-left:41px}
.thumb{display:block;width:17px;height:17px;background:#f0f0f0;border:1px solid;border-color:#fff #888 #888 #fff}

.strip{height:10px;flex:none;padding-left:408px;border-left:2px solid #a0a0a0}
.stripbar{width:546px;height:7px;display:flex;justify-content:space-between;align-items:center;padding:0 4px 0 3px;border:1px solid #b0b0b0;border-top:0;background-color:#fff;background-image:repeating-linear-gradient(90deg,#4a90e0 0 1px,#fff 1px 3px);background-size:100% 1px;background-repeat:no-repeat;background-position:0 2px}
.bt{width:0;height:0;border-left:4px solid transparent;border-right:4px solid transparent;border-top:5px solid #2a80e8}

.panels{height:78px;flex:none;display:flex;padding-left:283px;align-items:flex-start;border-bottom:1px solid #a8a8a8}
.group{margin:0;min-width:0;border:1px solid #c4c4c4;border-radius:6px;flex:none;height:72px;margin-top:5px;padding:0}
fieldset.group{height:78px;margin-top:-1px}
legend{padding:0 2px;margin-left:4px;font-weight:bold;font-size:12px;line-height:14px}
.lg-navy{color:#000080}
.lg-gray{color:#808080}
.lg-lblue{color:#98b0d0}
.g-chan{width:303px;display:flex}
.g-freq{width:104px;margin-left:6px}
.g-freq legend{margin-left:3px}
.g-sync{width:125px;margin-left:5px}
.g-ctrl{width:174px;margin-left:5px}
.g-time{width:63px;margin-left:6px}
.g-time legend{margin-left:6px}
.chanleft{width:214px;margin-left:5px;margin-top:-4px;display:flex;flex-direction:column}
.chans{display:flex;gap:0}
.ch{width:27px;height:19px;display:flex;align-items:center;justify-content:center;border:1.500px solid #1c4a70;border-radius:3px;background:linear-gradient(#d0d0d0,#a0a0a0);color:#707070;font-size:12px}
.ch-red{background:linear-gradient(#ff2020,#e00000);color:#300}
.ch-yel{width:47px;background:linear-gradient(#ffff30,#e8e800);color:#000;font-weight:bold}
.ch-yel + .ch{margin-left:1px}
.namerow{display:flex;align-items:center;gap:1px;margin-top:5px;margin-left:2px}
.namefield{width:178px;height:22px;flex:none;display:flex;align-items:center;justify-content:space-between;background:#fff;border:2px solid #f0f000;padding-left:2px;color:#000;font-size:11.500px;white-space:nowrap;overflow:hidden}
.dots{width:18px;height:17px;margin-right:1px;flex:none;background:#f0f0f0;border:1px solid;border-color:#fff #777 #777 #fff;text-align:center;line-height:11px;font-weight:bold}
.iconrow{display:flex;align-items:center;margin-top:0;margin-left:3px;gap:1px}
.ic{width:24px;height:24px;display:flex;align-items:center;justify-content:center;flex:none}
.ic svg{width:20px;height:19px}
.ic.pressed{background:repeating-conic-gradient(#e8e8e8 0 25%,#fff 0 50%) 0 0/2px 2px;border:1px solid;border-color:#999 #fff #fff #999}
.ic-fx{font:italic bold 14px "Liberation Serif",serif;color:#000}
.ic-fx small{font-size:9px}
.knob{display:block;flex:none;overflow:visible}
.kticks{fill:none;stroke:#b8b8b8;stroke-width:6;stroke-dasharray:1.500 2}
.kt-wide{stroke-width:5;stroke-dasharray:1 7}
.kmaj{fill:none;stroke:#555;stroke-width:1}
.kring{fill:#f0f0f0;stroke:url(#rg);stroke-width:3}
.kval{font:13px "Liberation Sans",sans-serif;fill:#000;text-anchor:middle}
.klab{font:10.500px "Liberation Sans",sans-serif;fill:#2c3c50;text-anchor:middle}

.syncgrid{display:grid;grid-template-columns:26px 32px 24px 30px;grid-template-rows:26px 32px;column-gap:0;padding:3px 0 0 8px;align-items:center;justify-items:center}
.si{width:24px;height:24px;display:flex;align-items:center;justify-content:center}
.si svg{width:20px;height:20px}
.si.pressed{background:repeating-conic-gradient(#e8e8e8 0 25%,#fff 0 50%) 0 0/2px 2px}
.syncsel{grid-column:1/3;width:47px;height:22px;justify-self:start;border:1px solid #a8a8a8;display:flex;align-items:center;justify-content:space-between;padding:0 7px 0 5px;font-size:12px}
.tri-dis{border-top-color:#a0a0a0}
.ctrlgrid{display:grid;grid-template-columns:33px 46px 46px 32px;grid-template-rows:28px 28px;gap:2px 3px;padding:3px 0 0 3px}
.cb{display:flex;align-items:center;justify-content:center;background:linear-gradient(#fbfbfb,#e0e0e0);border:1.500px solid #1c4a70;border-radius:3px}
.cb-dis{border-color:#b8b8b8;gap:3px;background:#ececec}
.pbar{width:6px;height:18px;background:linear-gradient(90deg,#777,#bbb);border:1px solid #999;border-radius:2px}
.cb-redb{border-color:#e00000;background:#fff}
.cb-start{grid-column:1/3;justify-content:flex-start;padding-left:9px}
.cb-start b{font-size:12px;margin-left:15px;color:#000}
.cb-num{background:#f8f8f8;border-radius:5px;color:#007000;font-weight:bold;font-size:13px}
.timers{display:flex;flex-direction:column;gap:2px;padding:3px 0 0 8px}
.tb{width:49px;height:28px;border-color:#555;gap:6px;justify-content:flex-start;padding-left:4px}

.status{height:20px;flex:none;display:flex;gap:2px;align-items:flex-end;background:#f0f0f0;font-size:10.900px}
.st{height:18px;display:flex;align-items:center;padding:0 0 2px 4px;border:1px solid #c8c8c8;border-width:1px 1px 0 0}
.st1{width:190px}.st2{flex:1}.st3{width:48px;padding-left:3px;border-left:1px solid #c8c8c8;font-size:11.500px}

.taskbar{height:40px;flex:none;display:flex;align-items:center;background:linear-gradient(90deg,#55646a 0,#5a6a70 30%,#46565f 70%,#334450 100%);border-top:1px solid #1e2a30;box-shadow:inset 0 1px 0 #8a9aa0}
.orb{width:54px;display:flex;justify-content:center;padding-left:2px;flex:none}
.task{width:62px;height:39px;display:flex;align-items:center;justify-content:center;flex:none;border-radius:3px}
.task.on{background:linear-gradient(#8a979c,#5f6e74);border:1px solid #2c3a40;box-shadow:inset 0 0 0 1px #a8b4b8}
.wrar{width:60px}
.taskdiv{width:2px;height:38px;margin:0 1px;background:#7a888e}
.task.cur{width:60px;background:linear-gradient(#d8dee0,#a4b0b4)}
.tray{margin-left:auto;display:flex;align-items:center;height:39px;color:#fff}
.tr-up{width:0;height:0;margin-right:15px;border-left:4px solid transparent;border-right:4px solid transparent;border-bottom:5px solid #fff}
.tr{width:24px;display:flex;justify-content:center}
.lang{width:16px;height:16px;margin:0 4px;background:#8a8f90;color:#fff;font-size:11px;display:flex;align-items:center;justify-content:center}
.clock{width:80px;display:flex;flex-direction:column;align-items:center;gap:2px;font-family:"Open Sans",sans-serif;font-size:11.500px;line-height:14px;color:#fff}
.showdesk{width:14px;height:37px;border:1px solid #8a989e;background:linear-gradient(#6a7a80,#3a4a54)}
```

FILE: scope.js
```js
(function () {
  var seed = 7;
  function rnd() { seed = (seed * 16807) % 2147483647; return seed / 2147483647; }

  var events = [146, 350, 552, 754, 956, 1157];
  var red = '';
  var n = 0;
  for (var x = 65; x < 1349; x += 3.37) {
    n++;
    var near = 1e9;
    for (var i = 0; i < events.length; i++) {
      var d = x - events[i];
      if (Math.abs(d) < Math.abs(near)) near = d;
    }
    var phase = ((x - 146) % 202 + 202) % 202 / 202;
    var wave = Math.cos(phase * 2 * Math.PI);
    var top = 138.5 - 2.5 * wave + (rnd() - 0.5) * 2;
    var bot = 181 + 3.5 * wave + (rnd() - 0.5) * 2;
    var px = Math.round(x);
    if (near > -9 && near <= -5) { top = 121 + rnd() * 3; bot = 178; }
    else if (near > -5 && near < 3) { top = 158 + rnd() * 5; bot = 172; }
    else if (near >= 3 && near < 9) { top = 127 + rnd() * 3; bot = 182; }
    red += 'M' + px + ' ' + top.toFixed(0) + 'V' + bot.toFixed(0);
    if (n % 3 === 0 && (near < -5 || near > 3)) {
      var m = 152 + rnd() * 12;
      red += 'M' + (px + 2) + ' ' + m.toFixed(0) + 'V' + (m + 4 + rnd() * 3).toFixed(0);
    }
  }
  for (var j = 0; j < events.length; j++) {
    red += 'M' + (events[j] + 1) + ' 165V208';
  }
  document.getElementById('red').setAttribute('d', red);

  var pulses = [[247, 396], [653, 806], [1055, 1205]];
  var y = '';
  function segment(a, b, level) {
    var s = 'M' + a + ' ' + level;
    for (var p = a + 6; p < b; p += 6) {
      s += 'H' + p + 'V' + (level + (rnd() > 0.85 ? (rnd() > 0.5 ? 1 : -1) : 0));
    }
    return s + 'H' + b;
  }
  var start = 64;
  for (var k = 0; k < pulses.length; k++) {
    y += segment(start, pulses[k][0], 451);
    y += 'M' + pulses[k][0] + ' 452V358';
    y += segment(pulses[k][0], pulses[k][1], 358);
    start = pulses[k][1];
  }
  y += segment(start, 1350, 451);
  document.getElementById('yellow').setAttribute('d', y);
})();
```
